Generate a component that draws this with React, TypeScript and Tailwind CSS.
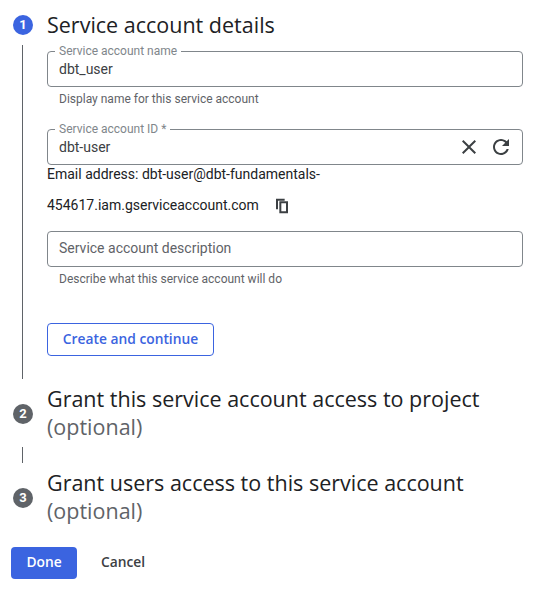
const headingFont = "font-['Open_Sans',sans-serif]";

function CloseIcon() {
  return (
    <svg width="24" height="24" viewBox="0 0 24 24" fill="currentColor">
      <path d="M19 6.41L17.59 5 12 10.59 6.41 5 5 6.41 10.59 12 5 17.59 6.41 19 12 13.41 17.59 19 19 17.59 13.41 12z" />
    </svg>
  );
}

function RefreshIcon() {
  return (
    <svg width="24" height="24" viewBox="0 0 24 24" fill="currentColor">
      <path d="M17.65 6.35C16.2 4.9 14.21 4 12 4c-4.42 0-7.99 3.58-7.99 8s3.57 8 7.99 8c3.73 0 6.84-2.55 7.73-6h-2.08c-.82 2.33-3.04 4-5.65 4-3.31 0-6-2.69-6-6s2.69-6 6-6c1.66 0 3.14.69 4.22 1.78L13 11h7V4l-2.35 2.35z" />
    </svg>
  );
}

function CopyIcon() {
  return (
    <svg width="16" height="16" viewBox="0 0 24 24" fill="currentColor" className="ml-[15px] text-[#3c4043]">
      <path d="M16 1H3v16h3V4h10V1zm5 4H8v18h13V5zm-3 15h-7V8h7v12z" />
    </svg>
  );
}

function StepBadge({ n, active }: { n: number; active?: boolean }) {
  return (
    <span
      className={`flex h-5 w-5 items-center justify-center rounded-full text-[13px] font-bold text-white font-['Roboto',sans-serif] ${
        active ? "bg-[#3b64e0]" : "bg-[#5f6368]"
      }`}
    >
      {n}
    </span>
  );
}

function Field({
  label,
  value,
  right,
}: {
  label?: string;
  value: string;
  right?: React.ReactNode;
}) {
  return (
    <div className="relative flex h-9 items-center justify-between rounded border border-[#80868b] pl-[11px] pr-[9px]">
      {label && (
        <span className="absolute left-[7px] top-[-8px] bg-white px-1 text-[12px] leading-[14px] text-[#80868b]">
          {label}
        </span>
      )}
      <span className={`text-[14px] ${label ? "text-[#3c4043]" : "-mt-[2px] text-[#5f6368]"}`}>{value}</span>
      {right}
    </div>
  );
}

function Helper({ children }: { children: React.ReactNode }) {
  return <p className="mt-[4px] pl-3 text-[12px] leading-4 text-[#5f6368]">{children}</p>;
}

function OptionalStep({ n, title }: { n: number; title: string }) {
  return (
    <div className="flex items-center">
      <div className="mt-[2px] flex w-[47px] justify-center pr-[1px]">
        <StepBadge n={n} />
      </div>
      <h2 className={`text-[21.5px] leading-7 text-[#202124] ${headingFont}`}>
        {title}
        <br />
        <span className="text-[#5f6368]">(optional)</span>
      </h2>
    </div>
  );
}

export default function App() {
  return (
    <div className="h-[593px] w-[533px] overflow-hidden bg-white pt-[10px] font-['Roboto',sans-serif]">
      <div className="flex items-center">
        <div className="flex w-[47px] justify-center pr-[1px]">
          <StepBadge n={1} active />
        </div>
        <h2 className={`text-[21.5px] leading-[30px] text-[#202124] ${headingFont}`}>Service account details</h2>
      </div>

      <div className="mt-[5px] flex">
        <div className="flex w-[47px] justify-center pr-[2px]">
          <div className="h-[334px] w-px bg-[#5f6368]" />
        </div>
        <div className="w-[476px] pt-[6px]">
          <Field label="Service account name" value="dbt_user" />
          <Helper>Display name for this service account</Helper>

          <div className="mt-[22px]">
            <Field
              label="Service account ID *"
              value="dbt-user"
              right={
                <span className="flex items-center gap-[8px] text-[#3c4043]">
                  <CloseIcon />
                  <RefreshIcon />
                </span>
              }
            />
          </div>
          <div className="text-[14px] leading-[31px] text-[#202124]">
            <div className="-mt-[6px]">Email address: dbt-user@dbt-fundamentals-</div>
            <div className="flex items-center">
              454617.iam.gserviceaccount.com
              <CopyIcon />
            </div>
          </div>

          <div className="mt-[10px]">
            <Field value="Service account description" />
          </div>
          <Helper>Describe what this service account will do</Helper>

          <button className={`mt-[36px] h-[33px] w-[167px] rounded border border-[#3b64e0] pb-[1px] text-[13.8px] font-[550] text-[#3b64e0] ${headingFont}`}>
            Create and continue
          </button>
        </div>
      </div>

      <div className="mt-[6px]">
        <OptionalStep n={2} title="Grant this service account access to project" />
      </div>
      <div className="mt-[6px] flex w-[47px] justify-center pr-[2px]">
        <div className="h-4 w-px bg-[#5f6368]" />
      </div>
      <div className="mt-[6px]">
        <OptionalStep n={3} title="Grant users access to this service account" />
      </div>

      <div className="mt-[22px] flex items-center pl-[11px]">
        <button className={`h-8 w-[66px] rounded bg-[#3b64e0] pb-[1px] text-[13.8px] font-[550] text-white ${headingFont}`}>Done</button>
        <button className={`ml-6 pb-[1px] text-[13.8px] font-[550] text-[#3c4043] ${headingFont}`}>Cancel</button>
      </div>
    </div>
  );
}
